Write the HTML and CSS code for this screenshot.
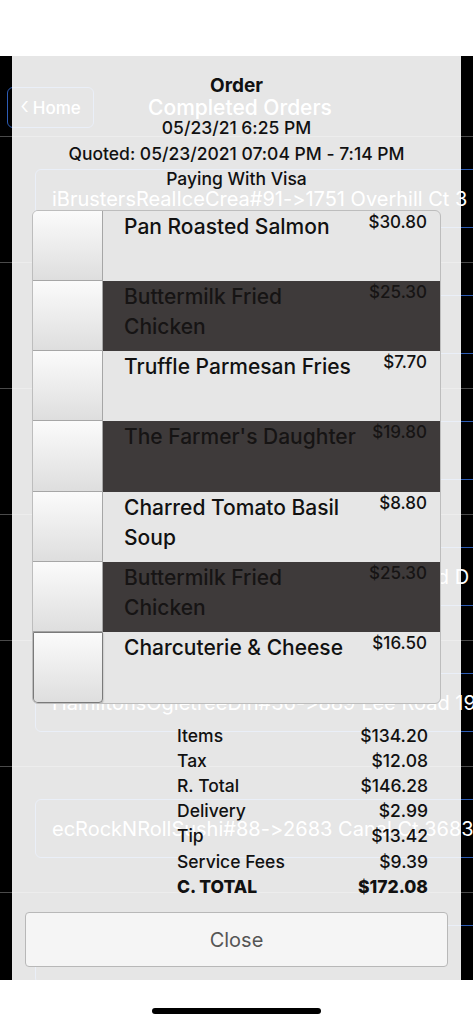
FILE: index.html
```html
<!DOCTYPE html>
<html lang="en">
<head>
<meta charset="utf-8">
<title>Order</title>
<link rel="stylesheet" href="styles.css">
</head>
<body>
<div class="topbar"></div>
<div class="screen">
  <div class="bg-page">
    <div class="nav">
      <div class="home-btn"><span class="chev">&lsaquo;</span> Home</div>
      <div class="nav-title">Completed Orders</div>
      <div></div>
    </div>
    <div class="cell"><div class="order-box">iBrustersRealIceCrea#91-&gt;1751 Overhill Ct 3</div></div>
    <div class="cell"><div class="order-box"></div></div>
    <div class="cell"><div class="order-box"></div></div>
    <div class="cell"><div class="order-box">ecFarmersDaughter#446-&gt;3390 Old Ford D</div></div>
    <div class="cell"><div class="order-box">HamiltonsOgletreeDin#36-&gt;889 Lee Road 19</div></div>
    <div class="cell"><div class="order-box">ecRockNRollSushi#88-&gt;2683 Canal Ct 3683</div></div>
    <div class="cell"><div class="order-box"></div></div>
  </div>

  <div class="modal">
    <div class="m-title">Order</div>
    <div class="m-lines">
      <div>05/23/21 6:25 PM</div>
      <div>Quoted: 05/23/2021 07:04 PM - 7:14 PM</div>
      <div>Paying With Visa</div>
    </div>

    <div class="items">
      <div class="item light"><div class="check"></div><div class="name">Pan Roasted Salmon</div><div class="price">$30.80</div></div>
      <div class="item dark"><div class="check"></div><div class="name">Buttermilk Fried Chicken</div><div class="price">$25.30</div></div>
      <div class="item light"><div class="check"></div><div class="name">Truffle Parmesan Fries</div><div class="price">$7.70</div></div>
      <div class="item dark"><div class="check"></div><div class="name">The Farmer's Daughter</div><div class="price">$19.80</div></div>
      <div class="item light"><div class="check"></div><div class="name">Charred Tomato Basil Soup</div><div class="price">$8.80</div></div>
      <div class="item dark"><div class="check"></div><div class="name">Buttermilk Fried Chicken</div><div class="price">$25.30</div></div>
      <div class="item light last"><div class="check"></div><div class="name">Charcuterie &amp; Cheese</div><div class="price">$16.50</div></div>
    </div>

    <div class="totals">
      <div>Items</div><div class="val">$134.20</div>
      <div>Tax</div><div class="val">$12.08</div>
      <div>R. Total</div><div class="val">$146.28</div>
      <div>Delivery</div><div class="val">$2.99</div>
      <div>Tip</div><div class="val">$13.42</div>
      <div>Service Fees</div><div class="val">$9.39</div>
      <div class="grand">C. TOTAL</div><div class="val grand">$172.08</div>
    </div>

    <div class="close-btn">Close</div>
  </div>
</div>
<div class="home-area"><div class="home-bar"></div></div>
</body>
</html>
```
FILE: styles.css
```css
* { box-sizing: border-box; margin: 0; padding: 0; }
html, body { width: 473px; height: 1024px; overflow: hidden; }
body {
  background: #fff;
  font-family: Inter, "Liberation Sans", sans-serif;
  font-feature-settings: "calt" 0;
  font-variant-ligatures: none;
  color: #111;
}

.topbar { height: 56px; background: #fff; }

.screen { position: relative; height: 924px; background: #000; overflow: hidden; }

/* background page (seen through the translucent modal) */
.nav {
  height: 81px;
  border-bottom: 1px solid #4a4a4a;
  display: grid;
  grid-template-columns: 1fr auto 1fr;
  align-items: start;
  padding: 31px 0 0 7px;
}
.home-btn {
  justify-self: start;
  width: 87px; height: 41px;
  border: 1px solid #2d5cb4;
  border-radius: 6px;
  color: #fff;
  font-size: 17px; font-weight: 500;
  display: flex; align-items: center; justify-content: center; gap: 4px;
}
.chev { font-size: 24px; font-weight: 300; line-height: 1; margin-top: -3px; }
.nav-title { color: #fff; font-size: 21px; font-weight: 500; line-height: 41px; }

.cell { height: 126px; border-bottom: 1px solid #4a4a4a; padding: 32px 0 0 35px; }
.order-box {
  height: 59px;
  margin-right: -30px;
  border: 1px solid #2d5cb4;
  border-radius: 6px;
  color: #fff;
  font-size: 20px;
  padding-left: 16px;
  display: flex; align-items: center;
  white-space: nowrap; overflow: hidden;
}

/* modal */
.modal {
  position: absolute; top: 0; bottom: 0; left: 12px; right: 12px;
  background: rgba(255,255,255,0.9);
  display: flex; flex-direction: column;
  padding: 19px 0 13px;
}
.m-title { text-align: center; font-size: 19px; font-weight: 700; line-height: 22px; }
.m-lines { margin-top: 18px; text-align: center; font-size: 17.5px; font-weight: 500; line-height: 25.5px; }

.items {
  margin: 18px 20px 0;
  border: 1px solid #bdbdbd;
  border-radius: 6px;
  overflow: hidden;
  background: #e6e6e6;
}
.item { height: 70.3px; display: grid; grid-template-columns: 70px 259px 1fr; }
.item.dark { background: #3e3a3a; }
.item.dark .name, .item.dark .price { color: #161414; }
.check {
  background: linear-gradient(#fbfbfb, #dedede);
  border-right: 1px solid #a6a6a6;
  border-bottom: 1px solid #a6a6a6;
}
.item.last .check { border: 1px solid #7a7a7a; border-radius: 0 0 4px 4px; box-shadow: 0 1px 2px rgba(0,0,0,0.35); }
.name { padding: 1px 0 0 21px; font-size: 21px; font-weight: 500; line-height: 30px; }
.price { padding: 1px 13px 0 0; text-align: right; font-size: 17px; font-weight: 500; line-height: 20px; }

.totals {
  margin-top: 19px;
  padding: 0 33px 0 165px;
  display: grid; grid-template-columns: 1fr auto;
  font-size: 17.5px; font-weight: 500; line-height: 25.2px;
}
.totals .val { text-align: right; }
.totals .grand { font-weight: 800; }

.close-btn {
  margin: auto 13px 0;
  height: 55px;
  background: #f5f5f5;
  border: 1px solid #b8b8b8;
  border-radius: 4px;
  display: flex; align-items: center; justify-content: center;
  font-size: 20px; color: #555;
}

.home-area { height: 44px; background: #fff; padding-top: 28px; display: flex; justify-content: center; }
.home-bar { width: 169px; height: 6px; border-radius: 3px; background: #000; }
```
